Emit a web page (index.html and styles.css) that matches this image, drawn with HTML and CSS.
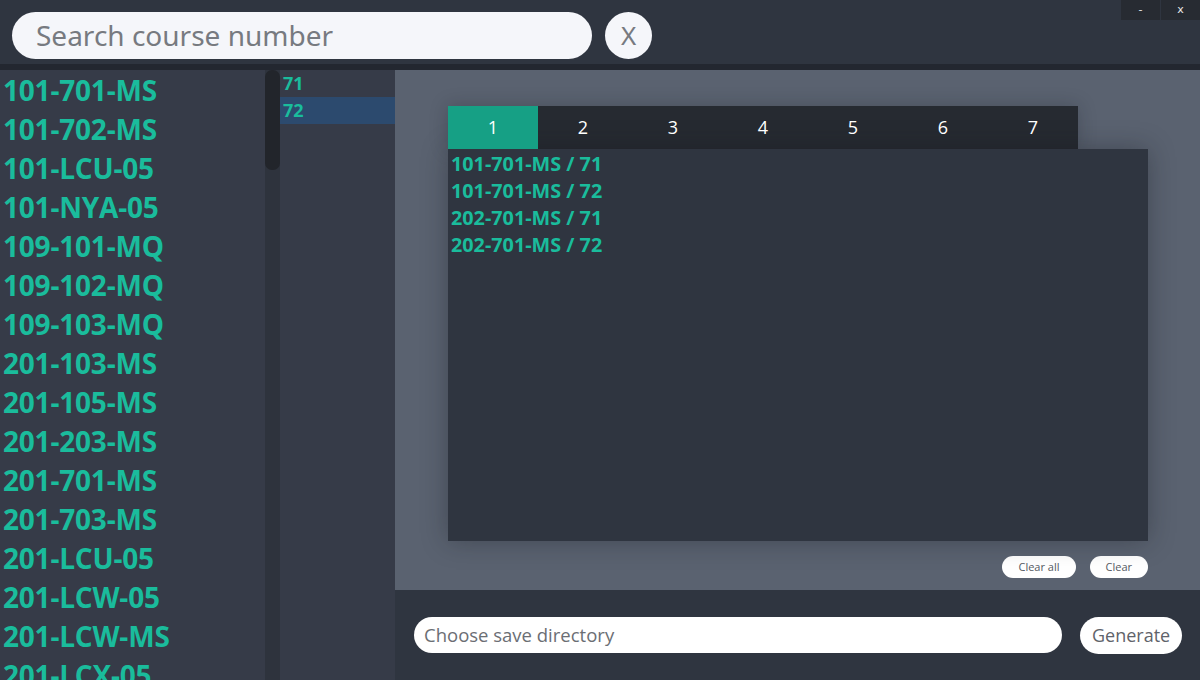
FILE: index.html
```html
<!DOCTYPE html>
<html>
<head>
<meta charset="utf-8">
<link rel="stylesheet" href="styles.css">
</head>
<body>
<div class="app">
  <div class="topbar">
    <div class="search">Search course number</div>
    <div class="clear-x">X</div>
    <div class="winbtns"><div class="wb">-</div><div class="wb">x</div></div>
  </div>
  <div class="sep"></div>
  <div class="main">
    <div class="courses">
      <div class="course">101-701-MS</div>
      <div class="course">101-702-MS</div>
      <div class="course">101-LCU-05</div>
      <div class="course">101-NYA-05</div>
      <div class="course">109-101-MQ</div>
      <div class="course">109-102-MQ</div>
      <div class="course">109-103-MQ</div>
      <div class="course">201-103-MS</div>
      <div class="course">201-105-MS</div>
      <div class="course">201-203-MS</div>
      <div class="course">201-701-MS</div>
      <div class="course">201-703-MS</div>
      <div class="course">201-LCU-05</div>
      <div class="course">201-LCW-05</div>
      <div class="course">201-LCW-MS</div>
      <div class="course">201-LCX-05</div>
    </div>
    <div class="scroll"><div class="thumb"></div></div>
    <div class="sections">
      <div class="sec">71</div>
      <div class="sec selected">72</div>
    </div>
    <div class="right">
      <div class="workspace">
        <div class="card">
          <div class="tabs">
            <div class="tab active">1</div>
            <div class="tab">2</div>
            <div class="tab">3</div>
            <div class="tab">4</div>
            <div class="tab">5</div>
            <div class="tab">6</div>
            <div class="tab">7</div>
          </div>
          <div class="content">
            <div class="entry">101-701-MS / 71</div>
            <div class="entry">101-701-MS / 72</div>
            <div class="entry">202-701-MS / 71</div>
            <div class="entry">202-701-MS / 72</div>
          </div>
        </div>
        <div class="actions">
          <div class="pill">Clear all</div>
          <div class="pill">Clear</div>
        </div>
      </div>
      <div class="bottom">
        <div class="dir">Choose save directory</div>
        <div class="gen">Generate</div>
      </div>
    </div>
  </div>
</div>
</body>
</html>
```

FILE: styles.css
```css
* { box-sizing: border-box; }
html, body { margin: 0; padding: 0; }
body { width: 1200px; height: 680px; overflow: hidden; background: #2f3540; font-family: "Open Sans", "Noto Sans", sans-serif; }
.app { display: flex; flex-direction: column; height: 680px; }
.topbar { height: 64px; background: #2f3540; display: flex; align-items: flex-start; padding: 12px 0 0 12px; position: relative; }
.search { width: 580px; height: 47px; border-radius: 24px; background: #f5f6fa; color: #777a80; font-size: 28px; line-height: 47px; padding-left: 24px; font-family: "Noto Sans", sans-serif; }
.clear-x { width: 47px; height: 47px; border-radius: 50%; background: #f5f6fa; margin-left: 13px; color: #777a80; font-size: 26px; line-height: 47px; text-align: center; font-family: "Noto Sans", sans-serif; }
.winbtns { position: absolute; top: 0; right: 0; display: flex; gap: 1px; background: #2f3540; }
.wb { width: 39px; height: 20px; background: #272b32; color: #e8e8e8; font-size: 11px; line-height: 20px; text-align: center; font-family: "DejaVu Sans", sans-serif; }
.sep { height: 6px; background: #232730; }
.main { flex: 1; display: flex; min-height: 0; }
.courses { width: 265px; background: #363b48; overflow: hidden; padding-top: 1px; }
.course { height: 39px; line-height: 39px; padding-left: 3px; color: #1abc9c; font-weight: 700; font-size: 28px; white-space: nowrap; letter-spacing: -0.2px; }
.scroll { width: 15px; background: #2e333d; }
.thumb { height: 100px; background: #22252b; border-radius: 7px; }
.sections { width: 115px; background: #363b48; }
.sec { height: 27px; line-height: 27px; padding-left: 3px; color: #1abc9c; font-weight: 700; font-size: 18px; }
.sec.selected { background: #2c4a6e; }
.right { flex: 1; display: flex; flex-direction: column; }
.workspace { height: 520px; background: #5a6270; padding: 36px 52px 0 53px; }
.card { width: 700px; position: relative; }
.tabs { display: flex; width: 630px; background: #262a31; height: 43px; box-shadow: 0 0 18px rgba(20,24,30,0.25); }
.tab { width: 90px; height: 43px; line-height: 43px; text-align: center; color: #ffffff; font-size: 18px; }
.tab.active { background: #16a085; }
.content { height: 392px; background: #2f3540; padding-top: 1px; box-shadow: 0 0 24px rgba(20,24,30,0.35); }
.entry { height: 27px; line-height: 27px; padding-left: 3px; color: #1abc9c; font-weight: 700; font-size: 19.8px; white-space: nowrap; }
.actions { display: flex; justify-content: flex-end; gap: 14px; margin-top: 15px; width: 700px; }
.pill { height: 22px; border-radius: 11px; background: #fff; color: #555a62; font-size: 11px; line-height: 22px; padding: 0 16px; }
.bottom { flex: 1; background: #2f3540; display: flex; align-items: flex-start; padding: 27px 0 0 19px; }
.dir { width: 648px; height: 36px; border-radius: 18px; background: #fff; color: #6b6e74; font-size: 18.5px; line-height: 36px; padding-left: 10px; }
.gen { margin-left: 18px; height: 37px; border-radius: 19px; background: #fff; color: #5f636a; font-size: 18px; line-height: 37px; padding: 0 12px; }
```
